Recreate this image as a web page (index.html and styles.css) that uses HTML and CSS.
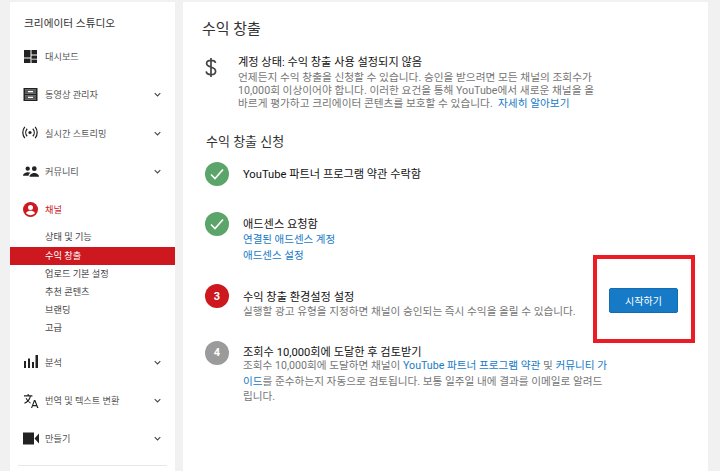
FILE: index.html
```html
<!DOCTYPE html>
<html lang="ko">
<head>
<meta charset="utf-8">
<title>수익 창출</title>
<link rel="stylesheet" href="styles.css">
</head>
<body>
<div class="page">
  <aside class="sidebar">
    <div class="studio">크리에이터 스튜디오</div>
    <nav class="nav">
      <div class="item">
        <svg class="ico" viewBox="0 0 15 15"><path d="M1 1h6.500v7.500H1zM8.500 1H14v4.500H8.500zM8.500 6.500H14V14H8.500zM1 9.500h6.500V14H1z"/><path d="M8.500 10.200H14" stroke="#fff" stroke-width=".8"/></svg>
        <span class="label">대시보드</span>
      </div>
      <div class="item">
        <svg class="ico" viewBox="0 0 15 15"><path fill-rule="evenodd" d="M0.500 1h14v13h-14zM2 2.500v4.200h11V2.500zM2 8.200v4.300h11V8.200z"/><path d="M2 2.500h11v4.200H2zM2 8.200h11v4.300H2z" opacity=".75"/><path d="M5 4h5v1.300H5zM5 9.700h5V11H5z" fill="#fff"/></svg>
        <span class="label">동영상 관리자</span>
        <svg class="chev" viewBox="0 0 10 6"><path d="M1 1l4 4 4-4" fill="none" stroke="#444" stroke-width="1.500"/></svg>
      </div>
      <div class="item">
        <svg class="ico ico-wide ico-live" viewBox="0 0 17 15"><circle cx="8.500" cy="7.500" r="1.700"/><path d="M5.500 3.500a6 6 0 0 0 0 8M11.500 3.500a6 6 0 0 1 0 8M3 1.500a9.500 9.500 0 0 0 0 12M14 1.500a9.500 9.500 0 0 1 0 12" fill="none" stroke="#212121" stroke-width="1.300"/></svg>
        <span class="label">실시간 스트리밍</span>
        <svg class="chev" viewBox="0 0 10 6"><path d="M1 1l4 4 4-4" fill="none" stroke="#444" stroke-width="1.500"/></svg>
      </div>
      <div class="item">
        <svg class="ico ico-wide" viewBox="0 0 17 15"><circle cx="5" cy="4.500" r="2.300"/><circle cx="12" cy="4.500" r="2.500"/><path d="M0 12c0-2.500 3-3.800 5.200-3.800 1 0 2 .2 2.800.7C6.500 9.800 6 10.800 6 12zM7 13c0-2.700 3-4 5-4s5 1.300 5 4z"/></svg>
        <span class="label">커뮤니티</span>
        <svg class="chev" viewBox="0 0 10 6"><path d="M1 1l4 4 4-4" fill="none" stroke="#444" stroke-width="1.500"/></svg>
      </div>
      <div class="item item-active">
        <svg class="ico" viewBox="0 0 15 15"><circle cx="7.500" cy="7.500" r="7.500" fill="#cc181e"/><circle cx="7.500" cy="5.400" r="2.500" fill="#fff"/><path d="M3 11c.8-1.700 3-2.300 4.500-2.300S11.200 9.300 12 11c-1 1.300-2.700 2.200-4.500 2.200S4 12.300 3 11z" fill="#fff"/></svg>
        <span class="label label-active">채널</span>
      </div>
      <ul class="subs">
        <li class="sub">상태 및 기능</li>
        <li class="sub sub-active">수익 창출</li>
        <li class="sub">업로드 기본 설정</li>
        <li class="sub">추천 콘텐츠</li>
        <li class="sub">브랜딩</li>
        <li class="sub">고급</li>
      </ul>
      <div class="item">
        <svg class="ico" viewBox="0 0 15 15"><path d="M1 7h2v7H1zM5 4.500h2V14H5zM9 8h2v6H9zM12.500 1H15v13h-2.500z"/></svg>
        <span class="label">분석</span>
        <svg class="chev" viewBox="0 0 10 6"><path d="M1 1l4 4 4-4" fill="none" stroke="#444" stroke-width="1.500"/></svg>
      </div>
      <div class="item">
        <svg class="ico ico-wide" viewBox="0 0 17 16"><path d="M1 3h9M5.500 1v2M8 3c-.8 3.500-3 6.300-6.500 8M3.200 5.500c1 2.400 3 4.300 4.800 5.300" fill="none" stroke="#212121" stroke-width="1.200"/><path d="M8.500 16l3.200-8.500h1.400L16.500 16h-1.500l-.7-2h-3.900l-.7 2zM10.900 12.800h3L12.400 9z"/></svg>
        <span class="label">번역 및 텍스트 변환</span>
        <svg class="chev" viewBox="0 0 10 6"><path d="M1 1l4 4 4-4" fill="none" stroke="#444" stroke-width="1.500"/></svg>
      </div>
      <div class="item">
        <svg class="ico ico-wide" viewBox="0 0 16 12"><path d="M0 0h11v12H0zM11.500 6L16 1v10z"/></svg>
        <span class="label">만들기</span>
        <svg class="chev" viewBox="0 0 10 6"><path d="M1 1l4 4 4-4" fill="none" stroke="#444" stroke-width="1.500"/></svg>
      </div>
    </nav>
    <div class="rule"></div>
  </aside>
  <main class="main">
    <h1 class="title">수익 창출</h1>
    <section class="status">
      <svg class="dollar" viewBox="0 0 12 20"><path d="M10.500 5.500C10.300 3.700 8.500 2.800 6 2.800 3.500 2.800 1.600 4 1.600 6c0 4.400 9 2.500 9 7.700 0 2-2 3.400-4.600 3.400-2.700 0-4.600-1.100-4.800-3.200M6 .5v19" fill="none" stroke="#444" stroke-width="1.700"/></svg>
      <div class="status-body">
        <div class="heading">계정 상태: 수익 창출 사용 설정되지 않음</div>
        <p class="desc desc-status">언제든지 수익 창출을 신청할 수 있습니다. 승인을 받으려면 모든 채널의 조회수가<br>10,000회 이상이어야 합니다. 이러한 요건을 통해 YouTube에서 새로운 채널을 올<br>바르게 평가하고 크리에이터 콘텐츠를 보호할 수 있습니다. &nbsp;<a class="link">자세히 알아보기</a></p>
      </div>
    </section>
    <h2 class="subtitle">수익 창출 신청</h2>
    <div class="step step-1">
      <span class="badge badge-done"><svg class="tick" viewBox="0 0 14 12"><path d="M1 6.500l4 4 8-9" fill="none" stroke="#fff" stroke-width="1.600"/></svg></span>
      <div class="heading heading-single">YouTube 파트너 프로그램 약관 수락함</div>
    </div>
    <div class="step step-2">
      <span class="badge badge-done"><svg class="tick" viewBox="0 0 14 12"><path d="M1 6.500l4 4 8-9" fill="none" stroke="#fff" stroke-width="1.600"/></svg></span>
      <div class="step-text">
        <div class="heading">애드센스 요청함</div>
        <a class="link link-row">연결된 애드센스 계정</a>
        <a class="link link-row">애드센스 설정</a>
      </div>
    </div>
    <div class="step step-3">
      <span class="badge badge-now">3</span>
      <div class="step-text step-text-low">
        <div class="heading">수익 창출 환경설정 설정</div>
        <p class="desc desc-step">실행할 광고 유형을 지정하면 채널이 승인되는 즉시 수익을 올릴 수 있습니다.</p>
      </div>
      <button class="start">시작하기</button>
    </div>
    <div class="step step-4">
      <span class="badge badge-next">4</span>
      <div class="step-text step-text-high">
        <div class="heading">조회수 10,000회에 도달한 후 검토받기</div>
        <p class="desc desc-step">조회수 10,000회에 도달하면 채널이 <a class="link">YouTube 파트너 프로그램 약관</a> 및 <a class="link">커뮤니티 가<br>이드</a>를 준수하는지 자동으로 검토됩니다. 보통 일주일 내에 결과를 이메일로 알려드<br>립니다.</p>
      </div>
    </div>
  </main>
</div>
<div class="callout"></div>
</body>
</html>
```
FILE: styles.css
```css
* { box-sizing: border-box; }
html, body { margin: 0; height: 100%; overflow: hidden; }
body {
  background: #f1f1f1;
  font-family: Roboto, "Noto Sans CJK KR", sans-serif;
  color: #222;
}
.page {
  display: flex;
  gap: 8px;
  height: 471px;
  padding: 2px 12px 0 10px;
}
.sidebar {
  width: 165px;
  flex: none;
  background: #fff;
  padding-top: 14px;
  overflow: hidden;
}
.studio {
  font-size: 10.700px;
  line-height: 15px;
  color: #333;
  padding-left: 14px;
}
.nav { margin-top: 6px; }
.item {
  display: flex;
  align-items: center;
  height: 38.300px;
  padding-left: 13px;
  position: relative;
}
.ico {
  width: 15px;
  height: 15px;
  flex: none;
  fill: #222;
}
.ico-wide { width: 16px; margin-right: -1px; }
.ico-live { margin-left: -1px; margin-right: 0; }
.label {
  font-size: 9.200px;
  color: #555;
  margin-left: 7px;
  white-space: nowrap;
}
.label-active { color: #cc181e; }
.chev {
  position: absolute;
  right: 14px;
  top: 17px;
  width: 7px;
  height: 5px;
}
.subs {
  list-style: none;
  margin: 0 0 5px;
  padding: 0;
}
.sub {
  height: 18.200px;
  line-height: 18px;
  font-size: 9.200px;
  color: #444;
  padding-left: 35px;
}
.sub-active {
  background: #cc181e;
  color: #fff;
}
.rule {
  height: 1px;
  background: #e8e8e8;
  margin: 7px 8px 0;
}
.main {
  flex: 1;
  background: #fff;
  padding: 17px 20px 0 19px;
}
.title {
  margin: 0;
  font-size: 15px;
  line-height: 20px;
  font-weight: 400;
  color: #333;
}
.status {
  display: flex;
  margin-top: 16px;
}
.dollar {
  width: 12px;
  height: 21px;
  flex: none;
  margin: 2px 0 0 3px;
}
.status-body { margin-left: 21px; }
.heading {
  font-size: 11.200px;
  line-height: 15px;
  color: #111;
  font-weight: 400;
}
.heading-single { padding-top: 1px; }
.desc {
  margin: 0;
  color: #767676;
}
.desc-status {
  margin-top: 1px;
  font-size: 10.700px;
  line-height: 13px;
  white-space: nowrap;
}
.desc-step {
  margin-top: -1.500px;
  font-size: 10.650px;
  line-height: 15.500px;
  white-space: nowrap;
}
.link { color: #167ac6; }
.link-row {
  display: block;
  font-size: 10.500px;
  line-height: 15.500px;
}
.subtitle {
  margin: 23px 0 0 4px;
  font-size: 13px;
  line-height: 18px;
  font-weight: 400;
  color: #333;
}
.step {
  display: flex;
  margin-left: 3px;
}
.step-1 { margin-top: 11px; align-items: center; }
.step-2 { margin-top: 26px; }
.step-3 { margin-top: 21px; }
.step-4 { margin-top: 21.500px; }
.badge {
  width: 24px;
  height: 24px;
  border-radius: 50%;
  flex: none;
  display: flex;
  align-items: center;
  justify-content: center;
  color: #fff;
  font-size: 11px;
  font-weight: 700;
  margin-right: 14px;
}
.badge-done { background: #5ba56a; }
.badge-now { background: #cc181e; }
.badge-next { background: #9b9b9b; }
.tick { width: 14px; height: 12px; }
.step-text { width: 366px; padding-top: 5px; }
.step-text-low { padding-top: 6px; }
.step-text-high { padding-top: 4px; }
.start {
  width: 69px;
  height: 25px;
  margin: 4px 0 0;
  border: 1px solid #126db3;
  border-radius: 2px;
  background: #167ac6;
  color: #fff;
  font: 10px Roboto, "Noto Sans CJK KR", sans-serif;
  padding: 0;
  flex: none;
}
.callout {
  position: absolute;
  left: 593px;
  top: 255px;
  width: 102px;
  height: 88px;
  border: 4px solid #ed1c24;
}
```
